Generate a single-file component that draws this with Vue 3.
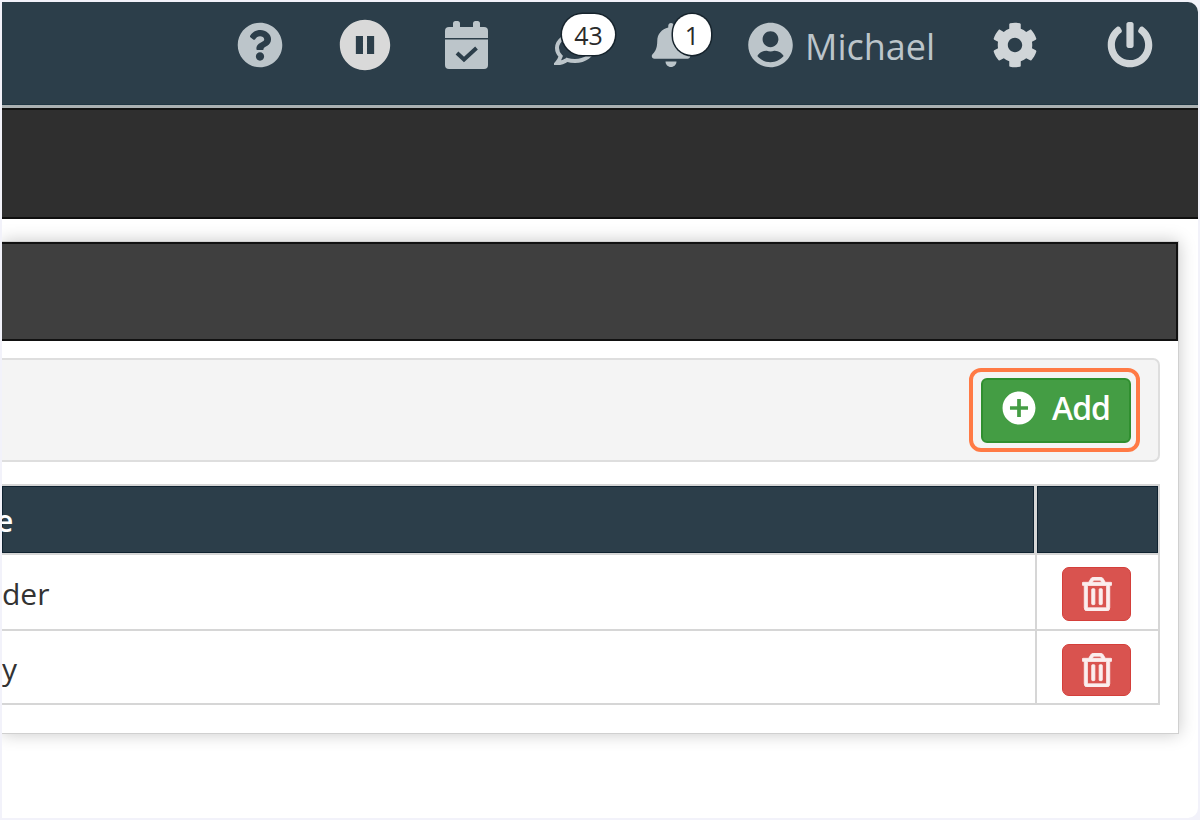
<template>
  <div class="page">
    <div class="frame">
      <header class="topbar">
        <svg class="ic ic-help" viewBox="0 0 512 512"><path d="M504 256c0 136.997-111.043 248-248 248S8 392.997 8 256C8 119.083 119.043 8 256 8s248 111.083 248 248zM262.655 90c-54.497 0-89.255 22.957-116.549 63.758-3.536 5.286-2.353 12.415 2.715 16.258l34.699 26.31c5.205 3.947 12.621 3.008 16.665-2.122 17.864-22.658 30.113-35.797 57.303-35.797 20.429 0 45.698 13.148 45.698 32.958 0 14.976-12.363 22.667-32.534 33.976C247.128 238.528 216 254.941 216 296v4c0 6.627 5.373 12 12 12h56c6.627 0 12-5.373 12-12v-1.333c0-28.462 83.186-29.647 83.186-106.667 0-58.002-60.165-102-116.531-102zM256 338c-25.365 0-46 20.635-46 46 0 25.364 20.635 46 46 46s46-20.636 46-46c0-25.365-20.635-46-46-46z" /></svg>
        <svg class="ic ic-pause" viewBox="0 0 512 512"><path fill-rule="evenodd" d="M256 8C119 8 8 119 8 256s111 248 248 248 248-111 248-248S393 8 256 8zM166 168h70v176h-70zM276 168h70v176h-70z" /></svg>
        <svg class="ic ic-cal" viewBox="0 0 43 48">
          <rect x="8" y="0" width="7" height="9" rx="2.500" />
          <rect x="28" y="0" width="7" height="9" rx="2.500" />
          <path d="M4 6h35a4 4 0 0 1 4 4v7H0v-7a4 4 0 0 1 4-4z" />
          <path d="M0 18.500h43V44a4 4 0 0 1-4 4H4a4 4 0 0 1-4-4z" />
          <path class="cal-check" d="M12 32l7 6.500L31.500 27" />
        </svg>
        <div class="notif notif-chat">
          <svg class="ic ic-chat" viewBox="0 0 42 34"><path d="M21 2.500C11 2.500 3 8.600 3 16c0 3.100 1.400 6 3.700 8.300C5.900 27 4 29.600 2.800 31c4.600 0 8.200-1.700 10.200-3.200 2.500.8 5.200 1.200 8 1.200 10 0 18-6 18-13S31 2.500 21 2.500z" /></svg>
          <span class="badge badge-chat">43</span>
        </div>
        <div class="notif notif-bell">
          <svg class="ic ic-bell" viewBox="0 0 448 512"><path d="M224 512c35.320 0 63.970-28.650 63.970-64H160.030c0 35.350 28.650 64 63.970 64zm215.390-149.710c-19.320-20.760-55.470-51.990-55.470-154.290 0-77.700-54.480-139.900-127.940-155.160V32c0-17.670-14.320-32-31.980-32s-31.980 14.330-31.980 32v20.840C118.560 68.100 64.080 130.300 64.080 208c0 102.300-36.150 133.530-55.470 154.290-6 6.450-8.660 14.160-8.610 21.710.11 16.400 12.980 32 32.100 32h383.800c19.120 0 32-15.600 32.100-32 .05-7.550-2.610-15.270-8.610-21.710z" /></svg>
          <span class="badge badge-bell">1</span>
        </div>
        <svg class="ic ic-user" viewBox="0 0 496 512"><path d="M248 8C111 8 0 119 0 256s111 248 248 248 248-111 248-248S385 8 248 8zm0 96c48.600 0 88 39.400 88 88s-39.400 88-88 88-88-39.400-88-88 39.400-88 88-88zm0 344c-58.700 0-111.300-26.600-146.500-68.200 18.800-35.400 55.600-59.800 98.500-59.800 2.400 0 4.800.4 7.100 1.100 13 4.200 26.600 6.900 40.900 6.900 14.300 0 28-2.700 40.900-6.900 2.300-.7 4.700-1.100 7.100-1.100 42.900 0 79.700 24.400 98.500 59.800C359.300 421.400 306.700 448 248 448z" /></svg>
        <span class="username">Michael</span>
        <svg class="ic ic-gear" viewBox="0 0 512 512"><path d="M487.400 315.700l-42.600-24.600c4.300-23.200 4.300-47 0-70.200l42.600-24.600c4.900-2.800 7.100-8.600 5.500-14-11.100-35.600-30-67.800-54.700-94.600-3.800-4.100-10-5.100-14.800-2.300L380.800 110c-17.900-15.400-38.500-27.300-60.800-35.100V25.800c0-5.600-3.900-10.500-9.400-11.700-36.700-8.200-74.300-7.800-109.200 0-5.500 1.200-9.400 6.100-9.400 11.700V75c-22.200 7.900-42.800 19.800-60.800 35.100L88.700 85.500c-4.900-2.800-11-1.900-14.800 2.300-24.700 26.700-43.600 58.900-54.700 94.600-1.700 5.400.6 11.200 5.500 14L67.300 221c-4.300 23.200-4.300 47 0 70.200l-42.600 24.600c-4.900 2.800-7.100 8.600-5.500 14 11.100 35.600 30 67.800 54.700 94.600 3.800 4.100 10 5.100 14.800 2.300l42.600-24.600c17.900 15.400 38.500 27.300 60.800 35.100v49.200c0 5.600 3.900 10.500 9.400 11.700 36.700 8.200 74.300 7.800 109.200 0 5.500-1.200 9.400-6.100 9.400-11.700v-49.200c22.200-7.900 42.800-19.800 60.800-35.100l42.600 24.600c4.900 2.800 11 1.900 14.800-2.300 24.700-26.700 43.600-58.900 54.700-94.600 1.500-5.500-.7-11.300-5.600-14.100zM256 336c-44.100 0-80-35.900-80-80s35.900-80 80-80 80 35.900 80 80-35.900 80-80 80z" /></svg>
        <svg class="ic ic-power" viewBox="0 0 512 512"><path d="M400 54.100c63 45 104 118.600 104 201.900 0 136.800-110.800 247.700-247.500 248C120 504.300 8.200 393 8 256.400 7.900 173.100 48.900 99.300 111.800 54.200c11.700-8.300 28-4.800 35 7.700L162.600 90c5.900 10.500 3.100 23.800-6.600 31-41.500 30.800-68 79.600-68 134.900-.1 92.300 74.500 168.100 168 168.100 91.600 0 168.600-74.200 168-169.100-.3-51.800-24.700-101.800-68.100-134-9.700-7.200-12.400-20.500-6.500-30.900l15.800-28.100c7-12.400 23.200-16.100 34.800-7.800zM296 264V24c0-13.300-10.700-24-24-24h-32c-13.300 0-24 10.700-24 24v240c0 13.300 10.700 24 24 24h32c13.300 0 24-10.700 24-24z" /></svg>
      </header>
      <div class="subbar"></div>

      <section class="panel">
        <div class="panel-head"></div>
        <div class="toolbar">
          <div class="add-wrap">
            <button class="btn-add">
              <svg class="ic-plus" viewBox="0 0 512 512"><path fill-rule="evenodd" d="M256 8C119 8 8 119 8 256s111 248 248 248 248-111 248-248S393 8 256 8zM228 120h56v108h108v56H284v108h-56V284H120v-56h108z" /></svg>
              Add
            </button>
            <span class="highlight"></span>
          </div>
        </div>
        <table class="grid">
          <thead>
            <tr>
              <th class="col-name"><span class="clip-e">e</span></th>
              <th class="col-act"></th>
            </tr>
          </thead>
          <tbody>
            <tr v-for="row in rows" :key="row.label" :class="row.cls">
              <td class="col-name">{{ row.label }}</td>
              <td class="col-act">
                <button class="btn-del">
                  <svg class="ic-trash" viewBox="0 0 448 512"><path d="M268 416h24a12 12 0 0 0 12-12V188a12 12 0 0 0-12-12h-24a12 12 0 0 0-12 12v216a12 12 0 0 0 12 12zM432 80h-82.410l-34-56.700A48 48 0 0 0 274.410 0H173.590a48 48 0 0 0-41.160 23.300L98.410 80H16A16 16 0 0 0 0 96v16a16 16 0 0 0 16 16h16v336a48 48 0 0 0 48 48h288a48 48 0 0 0 48-48V128h16a16 16 0 0 0 16-16V96a16 16 0 0 0-16-16zM171.840 50.910A6 6 0 0 1 177 48h94a6 6 0 0 1 5.150 2.910L293.610 80H154.390zM368 464H80V128h288zm-212-48h24a12 12 0 0 0 12-12V188a12 12 0 0 0-12-12h-24a12 12 0 0 0-12 12v216a12 12 0 0 0 12 12z" /></svg>
                </button>
              </td>
            </tr>
          </tbody>
        </table>
      </section>
    </div>
  </div>
</template>

<script setup>
const rows = [
  { label: "der", cls: "row-a" },
  { label: "y", cls: "row-b" },
];
</script>

<style>
html,
body {
  margin: 0;
  background: #f2f2fa;
}
</style>

<style scoped>
* {
  box-sizing: border-box;
}

.page {
  width: 1200px;
  height: 820px;
  padding: 2px;
  background: #f2f2fa;
  font-family: "Open Sans", "Liberation Sans", sans-serif;
}

.frame {
  height: 816px;
  background: #fff;
  border-radius: 0 10px 10px 0;
  overflow: hidden;
}

.topbar {
  height: 103px;
  padding: 0 45px 16px 0;
  background: #2c3e4a;
  display: flex;
  align-items: center;
  justify-content: flex-end;
  border-bottom: 1px solid #1f3542;
}

.ic {
  display: block;
  fill: #bcc5ca;
  flex: none;
}

.ic-help {
  width: 46px;
  height: 46px;
}

.ic-pause {
  width: 52px;
  height: 52px;
  margin-left: 56px;
  fill: #d9d9d9;
}

.ic-cal {
  width: 43px;
  height: 48px;
  margin-left: 54px;
}

.cal-check {
  fill: none;
  stroke: #2c3e4a;
  stroke-width: 4;
}

.notif {
  position: relative;
  flex: none;
}

.notif-chat {
  width: 42px;
  height: 34px;
  margin-left: 66px;
  margin-top: 8px;
}

.ic-chat {
  width: 42px;
  height: 34px;
  fill: none;
  stroke: #bcc5ca;
  stroke-width: 4;
}

.notif-bell {
  width: 44px;
  height: 44px;
  margin-left: 54px;
}

.ic-bell {
  width: 42px;
  height: 44px;
}

.badge {
  position: absolute;
  height: 41px;
  display: flex;
  align-items: center;
  justify-content: center;
  border-radius: 21px;
  background: #fff;
  color: #2a2a2a;
  font-size: 25px;
  box-shadow: 0 0 0 1.5px #16232c;
}

.badge-chat {
  left: 8px;
  top: -18px;
  width: 53px;
}

.badge-bell {
  left: 23px;
  top: -9px;
  width: 38px;
}

.ic-user {
  width: 45px;
  height: 46px;
  margin-left: 54px;
}

.username {
  margin-left: 12px;
  margin-top: 4px;
  width: 129px;
  font-size: 36px;
  line-height: 46px;
  color: #bcc5ca;
  white-space: nowrap;
}

.ic-gear {
  width: 46px;
  height: 46px;
  margin-left: 58px;
  fill: #d0d5d8;
}

.ic-power {
  width: 46px;
  height: 46px;
  margin-left: 69px;
  fill: #d0d5d8;
}

.subbar {
  height: 114px;
  border-top: 3px solid #aab0b2;
  background: #2f2f2f;
  border-bottom: 2px solid #0f0f0f;
  box-shadow: inset 0 2px 0 #121212;
}

.panel {
  margin: 22px 19px 0 0;
  padding-bottom: 28px;
  background: #fff;
  border: 1px solid #d0d0d0;
  border-left: 0;
  box-shadow: 0 0 16px rgba(0, 0, 0, 0.22);
}

.panel-head {
  height: 99px;
  background: #3f3f3f;
  border: 2px solid #111;
  border-left: 0;
}

.toolbar {
  margin: 17px 18px 0 0;
  padding: 18px 27px 17px 0;
  background: #f4f4f4;
  border: 2px solid #dedede;
  border-left: 0;
  border-radius: 0 7px 7px 0;
  display: flex;
  justify-content: flex-end;
}

.add-wrap {
  position: relative;
}

.btn-add {
  width: 150px;
  height: 65px;
  padding: 0 0 6px 19px;
  display: flex;
  align-items: center;
  gap: 16px;
  background: #449d44;
  border: 2px solid #2f8f2f;
  border-radius: 6px;
  color: #fff;
  font-family: inherit;
  font-size: 32px;
  font-weight: 600;
  letter-spacing: -1px;
}

.ic-plus {
  width: 34px;
  height: 34px;
  fill: #fff;
  flex: none;
}

.highlight {
  position: absolute;
  left: -12px;
  right: -9px;
  top: -10px;
  bottom: -9px;
  border: 4px solid #ff7a45;
  border-radius: 12px;
  pointer-events: none;
}

.grid {
  width: 1158px;
  margin-top: 22px;
  border-collapse: separate;
  border-spacing: 0;
  table-layout: fixed;
  font-size: 30px;
  color: #333;
}

.grid th {
  height: 71px;
  padding: 0;
  background: #2c3e4a;
  border: 2px solid #d6d6d6;
  border-left: 0;
  box-shadow: inset 0 0 0 1px #0f2230;
  text-align: left;
  color: #fff;
  font-weight: 600;
}

.grid th.col-name {
  border-right-width: 3px;
  width: 1035px;
  padding-top: 2px;
}

.clip-e {
  display: inline-block;
  margin-left: -6px;
}

.grid td {
  padding: 0;
  border-bottom: 2px solid #d6d6d6;
}

.grid td.col-name {
  border-right: 2px solid #d6d6d6;
  padding-top: 3px;
}

.grid td.col-act {
  border-right: 2px solid #d6d6d6;
  text-align: center;
}

.row-a td.col-act {
  padding: 12px 2px 8px 0;
}

.row-b td.col-act {
  padding: 13px 2px 7px 0;
}

.btn-del {
  width: 69px;
  display: inline-flex;
  align-items: center;
  justify-content: center;
  vertical-align: top;
  padding: 0;
  background: #d9534f;
  border: 1px solid #d43f3a;
  border-radius: 7px;
}

.row-a .btn-del {
  height: 54px;
}

.row-b .btn-del {
  height: 52px;
}

.ic-trash {
  width: 30px;
  height: 34px;
  fill: #fbeeee;
  stroke: #fbeeee;
  stroke-width: 12;
}
</style>
